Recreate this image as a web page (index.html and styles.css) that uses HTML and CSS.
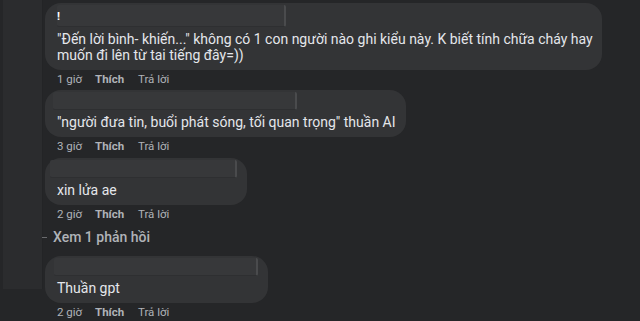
FILE: index.html
```html
<!DOCTYPE html>
<html lang="vi">
<head>
<meta charset="utf-8">
<link rel="stylesheet" href="styles.css">
</head>
<body>
<div class="page">
  <div class="rail"></div>
  <div class="thread">
    <div class="comment c1">
      <div class="bubble b1">
        <div class="redact r1"><span class="glyph">!</span></div>
        <div class="text">"Đến lời bình- khiến..." không có 1 con người nào ghi kiểu này. K biết tính chữa cháy hay muốn đi lên từ tai tiếng đây=))</div>
      </div>
      <div class="meta"><span class="time">1 giờ</span><span class="like">Thích</span><span class="reply">Trả lời</span></div>
    </div>
    <div class="comment c2">
      <div class="bubble b2">
        <div class="redact r2"></div>
        <div class="text">"người đưa tin, buổi phát sóng, tối quan trọng" thuần AI</div>
      </div>
      <div class="meta"><span class="time">3 giờ</span><span class="like">Thích</span><span class="reply">Trả lời</span></div>
    </div>
    <div class="comment c3">
      <div class="bubble b3">
        <div class="redact r3"></div>
        <div class="text">xin lửa ae</div>
      </div>
      <div class="meta"><span class="time">2 giờ</span><span class="like">Thích</span><span class="reply">Trả lời</span></div>
    </div>
    <div class="more"><span class="dash"></span>Xem 1 phản hồi</div>
    <div class="comment c4">
      <div class="bubble b4">
        <div class="redact r4"></div>
        <div class="text">Thuần gpt</div>
      </div>
      <div class="meta"><span class="time">2 giờ</span><span class="like">Thích</span><span class="reply">Trả lời</span></div>
    </div>
  </div>
</div>
</body>
</html>
```

FILE: styles.css
```css
html, body {
  margin: 0;
  padding: 0;
  background: #252628;
  width: 640px;
  height: 321px;
  overflow: hidden;
}
body {
  font-family: Roboto, "Noto Sans", sans-serif;
  color: #e4e6eb;
}
.page {
  display: flex;
  padding-left: 3px;
}
.rail {
  width: 39px;
  height: 289px;
  background: #2b2c2e;
  border-right: 1px solid #232426;
  flex: none;
}
.thread {
  margin-left: 2px;
  padding-top: 3px;
  display: flex;
  flex-direction: column;
  align-items: flex-start;
}
.comment {
  display: flex;
  flex-direction: column;
  align-items: flex-start;
}
.bubble {
  background: #333436;
  border-radius: 16px;
  padding: 2px 10px 7px 12px;
  box-sizing: border-box;
}
.b1 { width: 557px; padding-right: 8px; }
.redact {
  height: 18px;
  background: #37383a;
  border-radius: 2px;
  border-right: 2px solid #4a4b4d;
  border-bottom: 1px solid #2e2f31;
  box-sizing: border-box;
  display: flex;
  align-items: flex-end;
}
.r1 { width: 229px; height: 22px; }
.r2 { width: 244px; margin-left: -4px; }
.r3 { width: 187px; margin-left: -7px; }
.r4 { width: 204px; margin-left: -3px; }
.glyph {
  color: #ffffff;
  font-size: 11px;
  font-weight: 700;
  line-height: 1;
  margin-bottom: 4px;
}
.text {
  font-size: 14px;
  line-height: 16px;
  margin-top: 4px;
}
.meta {
  display: flex;
  font-size: 11.5px;
  line-height: 14px;
  color: #b0b3b8;
  padding-left: 12px;
  margin-top: 2px;
}
.time { width: 38px; }
.like { width: 43px; font-weight: 700; }
.c2 { margin-top: 4px; }
.c3 { margin-top: 5px; }
.more {
  margin-top: 7px;
  display: flex;
  align-items: center;
  font-size: 14px;
  line-height: 18px;
  font-weight: 500;
  color: #b0b3b8;
  margin-left: -3px;
}
.dash {
  width: 5px;
  height: 1px;
  background: #6a6b6e;
  margin-right: 6px;
}
.c4 { margin-top: 10px; }
```
